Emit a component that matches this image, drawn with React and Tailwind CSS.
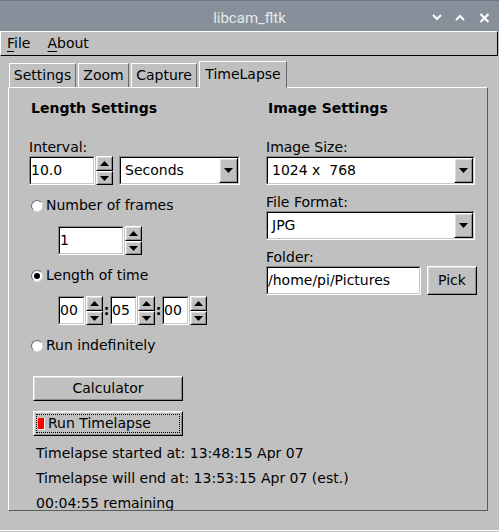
import React from "react";

function UpBox({ className = "", innerClass = "", children }) {
  return (
    <div className={"shrink-0 border border-t-white border-l-white border-b-black border-r-black bg-[#c0c0c0] " + className}>
      <div className={"h-full w-full border border-t-[#dcdcdc] border-l-[#dcdcdc] border-b-[#8c8c8c] border-r-[#8c8c8c] " + innerClass}>
        {children}
      </div>
    </div>
  );
}

function DownBox({ className = "", innerClass = "", children }) {
  return (
    <div className={"shrink-0 border border-t-[#8c8c8c] border-l-[#8c8c8c] border-b-white border-r-white " + className}>
      <div className={"h-full w-full border border-t-black border-l-black border-b-[#c8c8c8] border-r-[#c8c8c8] bg-white " + innerClass}>
        {children}
      </div>
    </div>
  );
}

function ArrowUp() {
  return (
    <svg width="9" height="5" viewBox="0 0 9 5">
      <polygon points="4.5,0 9,5 0,5" fill="#000" />
    </svg>
  );
}
function ArrowDown() {
  return (
    <svg width="9" height="5" viewBox="0 0 9 5">
      <polygon points="0,0 9,0 4.5,5" fill="#000" />
    </svg>
  );
}

function Spinner() {
  return (
    <div className="flex flex-col w-[17px] h-[29px]">
      <UpBox className="h-[15px]" innerClass="flex items-center justify-center">
        <ArrowUp />
      </UpBox>
      <UpBox className="h-[14px]" innerClass="flex items-center justify-center">
        <ArrowDown />
      </UpBox>
    </div>
  );
}

function Input({ w, value }) {
  return (
    <DownBox className={"h-[29px] " + w} innerClass="flex items-center overflow-hidden">
      <span className="leading-[17px] whitespace-pre">{value}</span>
    </DownBox>
  );
}

function Choice({ w, value }) {
  return (
    <DownBox className={"h-[29px] " + w} innerClass="flex items-center">
      <span className="flex-1 pl-[4px] leading-[17px] whitespace-pre">{value}</span>
      <UpBox className="w-[19px] h-full" innerClass="flex items-center justify-center">
        <ArrowDown />
      </UpBox>
    </DownBox>
  );
}

function Radio({ on, label }) {
  return (
    <div className="flex items-center h-[17px] ml-[2px]">
      <div className="w-[12px] h-[12px] rounded-full bg-white border border-t-[#6a6a6a] border-l-[#6a6a6a] border-b-[#dcdcdc] border-r-[#dcdcdc] flex items-center justify-center">
        {on && <div className="w-[6px] h-[6px] rounded-full bg-black" />}
      </div>
      <span className="ml-[3px] leading-[17px]">{label}</span>
    </div>
  );
}

function TimeBox({ value }) {
  return (
    <div className="flex">
      <Input w="w-[27px]" value={value} />
      <div className="ml-[1px]">
        <Spinner />
      </div>
    </div>
  );
}

export default function App() {
  return (
    <div className="w-[499px] h-[532px] overflow-hidden bg-[#c0c0c0] text-[14px] text-black font-['DejaVu_Sans',sans-serif] flex flex-col">
      {/* Title bar */}
      <div className="shrink-0 h-[31px] bg-[#87909a] border-t border-[#6d767f] flex items-center relative">
        <span className="absolute left-0 right-0 text-center font-['Roboto',sans-serif] text-[15px] text-[#e6e9ec] top-[6px]">
          libcam_fltk
        </span>
        <div className="absolute left-[432px] top-[13px]">
          <svg width="10" height="7" viewBox="0 0 10 7">
            <polyline points="1,1 5,5 9,1" fill="none" stroke="#fff" strokeWidth="2" />
          </svg>
        </div>
        <div className="absolute left-[455px] top-[13px]">
          <svg width="10" height="7" viewBox="0 0 10 7">
            <polyline points="1,6 5,2 9,6" fill="none" stroke="#fff" strokeWidth="2" />
          </svg>
        </div>
        <div className="absolute left-[479px] top-[12px]">
          <svg width="11" height="10" viewBox="0 0 11 10">
            <path d="M1.5,1 L9.5,9 M9.5,1 L1.5,9" fill="none" stroke="#fff" strokeWidth="2.2" />
          </svg>
        </div>
      </div>

      {/* Menu bar */}
      <div className="shrink-0 h-[25px] w-[498px] border border-t-white border-l-white border-b-black border-r-black flex items-center pl-[6px] gap-[17px]">
        <span className="leading-[17px]">
          <span className="underline underline-offset-[3px]">F</span>ile
        </span>
        <span className="leading-[17px]">
          <span className="underline underline-offset-[3px]">A</span>bout
        </span>
      </div>

      {/* Tabs */}
      <div className="shrink-0 mt-[5px] h-[26px] flex items-start pl-[9px] gap-[2px]">
        <div className="mt-[2px] h-[24px] w-[67px] border-t border-l border-white border-r border-r-[#6a6a6a] flex items-center justify-center">
          <span className="leading-[17px]">Settings</span>
        </div>
        <div className="mt-[2px] h-[24px] w-[51px] border-t border-l border-white border-r border-r-[#6a6a6a] flex items-center justify-center">
          <span className="leading-[17px]">Zoom</span>
        </div>
        <div className="mt-[2px] h-[24px] w-[66px] border-t border-l border-white border-r border-r-[#6a6a6a] flex items-center justify-center">
          <span className="leading-[17px]">Capture</span>
        </div>
        <div className="relative z-10 h-[27px] w-[88px] bg-[#c0c0c0] border-t border-l border-white border-r border-r-[#6a6a6a] flex items-start justify-center pt-[4px]">
          <span className="leading-[17px]">TimeLapse</span>
        </div>
      </div>

      {/* Panel */}
      <div className="shrink-0 ml-[8px] w-[480px] h-[424px] border border-t-white border-l-white border-b-[#5a5a5a] border-r-[#5a5a5a] overflow-hidden flex items-start">
        {/* Left column */}
        <div className="shrink-0 w-[256px] pl-[20px] pt-[12px] flex flex-col items-start">
          <div className="ml-[2px] leading-[17px] font-bold">Length Settings</div>
          <div className="mt-[22px] leading-[17px]">Interval:</div>
          <div className="flex">
            <Input w="w-[66px]" value="10.0" />
            <div className="ml-[1px]">
              <Spinner />
            </div>
            <div className="ml-[6px]">
              <Choice w="w-[121px]" value="Seconds" />
            </div>
          </div>
          <div className="mt-[12px]">
            <Radio label="Number of frames" />
          </div>
          <div className="mt-[12px] ml-[29px] flex">
            <Input w="w-[66px]" value="1" />
            <div className="ml-[1px]">
              <Spinner />
            </div>
          </div>
          <div className="mt-[12px]">
            <Radio on label="Length of time" />
          </div>
          <div className="mt-[12px] ml-[29px] flex items-center">
            <TimeBox value="00" />
            <span className="w-[7px] text-center font-bold leading-[17px]">:</span>
            <TimeBox value="05" />
            <span className="w-[7px] text-center font-bold leading-[17px]">:</span>
            <TimeBox value="00" />
          </div>
          <div className="mt-[12px]">
            <Radio label="Run indefinitely" />
          </div>
          <UpBox className="mt-[22px] ml-[4px] w-[150px] h-[25px]" innerClass="flex items-center justify-center">
            <span className="leading-[17px]">Calculator</span>
          </UpBox>
          <UpBox className="mt-[10px] ml-[4px] w-[150px] h-[25px]" innerClass="p-[1px]">
            <div className="h-full w-full border border-dotted border-black flex items-center">
              <div className="ml-[1px] w-[7px] h-[12px] bg-[#ff0000] border-r border-b border-white" />
              <span className="ml-[3px] leading-[17px]">Run Timelapse</span>
            </div>
          </UpBox>
          <div className="mt-[9px] ml-[7px] leading-[17px] whitespace-nowrap">Timelapse started at: 13:48:15 Apr 07</div>
          <div className="mt-[8px] ml-[7px] leading-[17px] whitespace-nowrap">Timelapse will end at: 13:53:15 Apr 07 (est.)</div>
          <div className="mt-[8px] ml-[7px] leading-[17px] whitespace-nowrap">00:04:55 remaining</div>
        </div>

        {/* Right column */}
        <div className="flex-1 pt-[12px] flex flex-col items-start">
          <div className="ml-[3px] leading-[17px] font-bold">Image Settings</div>
          <div className="mt-[22px] ml-[1px] leading-[17px]">Image Size:</div>
          <div className="ml-[1px]">
            <Choice w="w-[209px]" value="1024 x  768" />
          </div>
          <div className="mt-[9px] ml-[1px] leading-[17px]">File Format:</div>
          <div className="ml-[1px]">
            <Choice w="w-[209px]" value="JPG" />
          </div>
          <div className="mt-[9px] ml-[1px] leading-[17px]">Folder:</div>
          <div className="ml-[1px] flex">
            <Input w="w-[155px]" value="/home/pi/Pictures" />
            <UpBox className="ml-[6px] w-[50px] h-[29px]" innerClass="flex items-center justify-center">
              <span className="leading-[17px]">Pick</span>
            </UpBox>
          </div>
        </div>
      </div>

      <div className="shrink-0 mt-[19px] h-[1px] w-full bg-white" />
    </div>
  );
}
